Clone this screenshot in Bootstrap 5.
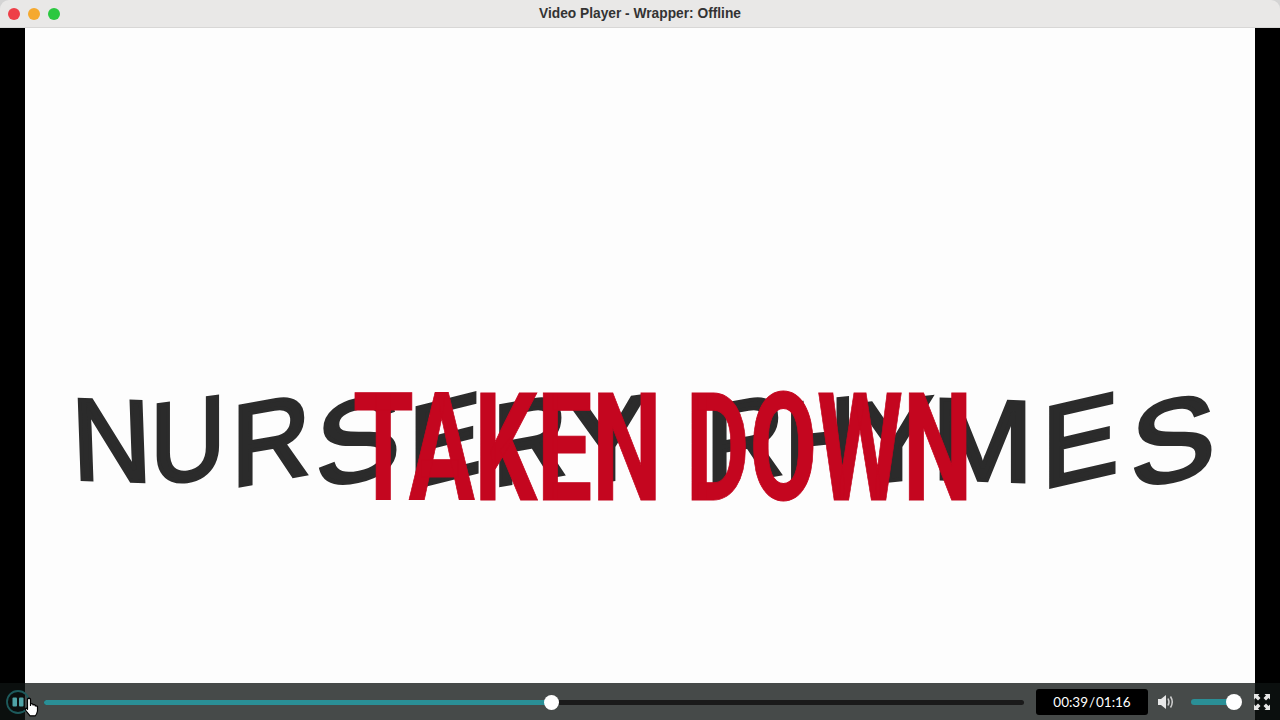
<!DOCTYPE html>
<html lang="en">
<head>
<meta charset="utf-8">
<title>Video Player - Wrapper: Offline</title>
<link href="https://cdn.jsdelivr.net/npm/bootstrap@5.3.0/dist/css/bootstrap.min.css" rel="stylesheet">
<style>
html,body{height:720px;overflow:hidden;background:#d4d4d4;margin:0}
.win{width:1280px;height:720px;border-radius:9px 9px 0 0;overflow:hidden}
.titlebar{height:28px;background:#e9e8e7;border-bottom:1px solid #d8d7d6;font:700 13.75px "Liberation Sans",Arial,sans-serif;color:#333;padding-left:8px}
.titletext{left:0;right:0;top:0;line-height:27px;text-align:center}
.dot{width:12px;height:12px;border-radius:50%}
.dot-r{background:#ee3f48}.dot-y{background:#f5a92f}.dot-g{background:#2bc840}
.gap-tl{gap:8px}
.stage{height:692px}
.side{width:25px;background:#000}
.canvas{background:#fdfdfd;padding:352px 0 0 48px;overflow:hidden}
.brush{font:400 115px/120px "Liberation Sans",Arial,sans-serif;color:#2b2b2b;-webkit-text-stroke:4px #2b2b2b;white-space:nowrap;display:flex}
.brush span{display:flex;justify-content:center;flex:none;width:78px}
.brush span:nth-child(1){width:77px;transform:skewY(4deg) rotate(-2deg) scaleX(.95)}
.brush span:nth-child(2){width:76px;transform:skewY(-8deg) scaleX(.9)}
.brush span:nth-child(3){width:90px;transform:skewY(-10deg) scaleX(.95)}
.brush span:nth-child(4){width:84px;transform:skewY(-12deg) scaleX(1.1)}
.brush span:nth-child(5){width:90px;transform:skewY(-14deg) scaleX(.95)}
.brush span:nth-child(6){width:80px;transform:skewY(-10deg) scaleX(.9)}
.brush span:nth-child(7){width:76px;transform:skewY(-8deg)}
.brush span:nth-child(8){width:59px}
.brush span:nth-child(9){width:80px;transform:skewY(-10deg) scaleX(.95)}
.brush span:nth-child(10){width:70px;transform:skewY(-6deg) scaleX(.85)}
.brush span:nth-child(11){width:80px;transform:skewY(-6deg)}
.brush span:nth-child(12){width:95px;transform:skewY(2deg) scaleX(1.06)}
.brush span:nth-child(13){width:100px;transform:skewY(-13deg) scaleX(1)}
.brush span:nth-child(14){width:86px;transform:skewY(-12deg) scaleX(1.1)}
.stamp{left:328px;top:346px;font:700 150px/150px Roboto,"Liberation Sans",sans-serif;color:#c4061f;-webkit-text-stroke:1px #c4061f;white-space:nowrap;transform-origin:0 0;transform:scaleX(.654)}
.ctrl{left:0;right:0;bottom:0;height:37px;background:rgba(14,20,18,.77);padding:0 6px}
.pausebtn{width:24px;height:24px;flex:none;margin-right:14px}
.track{height:5px;background:#1a1a1a;border-radius:3px;width:980px;flex:none;margin-right:12px;top:1px}
.fill{height:5px;width:508px;background:#2a8f96;border-radius:3px}
.thumb{width:15px;height:15px;background:#fff;border-radius:50%;top:-5px;left:500px}
.clock{width:112px;height:26px;background:#000;border-radius:3px;color:#fff;font:400 13.5px Lato,sans-serif;line-height:26px;text-align:center;flex:none;word-spacing:-2.5px}
.volico{margin:0 16px 0 9px;flex:none}
.voltrack{width:43px;height:6px;background:#2a8f96;border-radius:3px;flex:none}
.volthumb{width:16px;height:16px;background:#fff;border-radius:50%;top:-5px;left:35px}
.fsico{margin-left:20px;flex:none}
.pointer{left:23px;top:669px;width:18px;height:20px}
</style>
</head>
<body>
<div class="win">
  <div class="titlebar position-relative d-flex align-items-center gap-tl">
    <span class="dot dot-r"></span><span class="dot dot-y"></span><span class="dot dot-g"></span>
    <div class="titletext position-absolute">Video Player - Wrapper: Offline</div>
  </div>
  <div class="stage position-relative d-flex">
    <div class="side"></div>
    <div class="canvas flex-grow-1 position-relative">
      <div class="brush"><span>N</span><span>U</span><span>R</span><span>S</span><span>E</span><span>R</span><span>Y</span><span>&nbsp;</span><span>R</span><span>H</span><span>Y</span><span>M</span><span>E</span><span>S</span></div>
      <div class="stamp position-absolute">TAKEN DOWN</div>
    </div>
    <div class="side"></div>
    <div class="ctrl position-absolute d-flex align-items-center">
      <svg class="pausebtn" viewBox="0 0 24 24" xmlns="http://www.w3.org/2000/svg">
        <circle cx="12" cy="12" r="11" fill="none" stroke="#1d5a5c" stroke-width="1.800"/>
        <rect x="6.500" y="7.500" width="4.500" height="9" rx="1" fill="#4fa3a6"/>
        <rect x="13" y="7.500" width="4.500" height="9" rx="1" fill="#4fa3a6"/>
      </svg>
      <div class="track position-relative">
        <div class="fill"></div>
        <div class="thumb position-absolute"></div>
      </div>
      <div class="clock">00:39 / 01:16</div>
      <svg class="volico" width="18" height="16" viewBox="0 0 18 16" xmlns="http://www.w3.org/2000/svg">
        <path d="M1 5h3l5-4v14l-5-4H1z" fill="#e8e8e8"/>
        <path d="M11 4.500q2 3.500 0 7M13.500 2.500q3.500 5.500 0 11" fill="none" stroke="#cfcfcf" stroke-width="1.500"/>
      </svg>
      <div class="voltrack position-relative"><div class="volthumb position-absolute"></div></div>
      <svg class="fsico" width="16" height="16" viewBox="0 0 16 16" xmlns="http://www.w3.org/2000/svg" fill="#e6e6e6">
        <path d="M0 0h5.500L4 1.500 6.500 4 4 6.500 1.500 4 0 5.500zM16 0v5.500L14.500 4 12 6.500 9.500 4 12 1.500 10.500 0zM0 16v-5.500L1.500 12 4 9.500 6.500 12 4 14.500 5.500 16zM16 16h-5.500l1.500-1.500L9.500 12 12 9.500 14.500 12 16 10.500z"/>
      </svg>
    </div>
    <svg class="pointer position-absolute" viewBox="0 0 18 20" xmlns="http://www.w3.org/2000/svg">
      <path d="M4.500 2q1.500-1.500 3 0V8.500V7q1.500-1 2.500 .3V8q1.500-.8 2.300 .3V9q1.500-.6 2.200 .6V14q-.5 3-2.300 4.800H7L2.800 13.500q-1.200-2 .6-2.300l1.100 1.100z" fill="#fff" stroke="#000" stroke-width="1.200" stroke-linejoin="round"/>
    </svg>
  </div>
</div>
</body>
</html>
